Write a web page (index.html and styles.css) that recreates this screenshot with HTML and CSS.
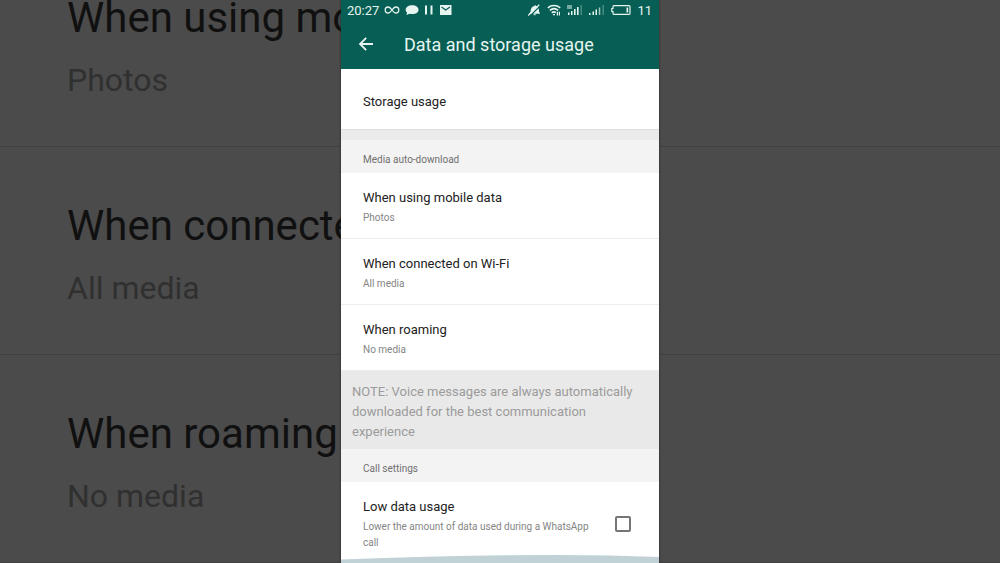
FILE: index.html
```html
<!DOCTYPE html>
<html lang="en">
<head>
<meta charset="utf-8">
<title>Data and storage usage</title>
<link rel="stylesheet" href="styles.css">
</head>
<body>
<div class="stage">
  <div class="backdrop" aria-hidden="true">
    <div class="back-row"><div class="back-title">When using mobile data</div><div class="back-sub">Photos</div></div>
    <div class="back-row"><div class="back-title">When connected on Wi-Fi</div><div class="back-sub">All media</div></div>
    <div class="back-row"><div class="back-title">When roaming</div><div class="back-sub">No media</div></div>
  </div>
  <main class="phone">
    <div class="status">
      <span>20:27</span>
      <svg class="loop" width="16" height="10" viewBox="0 0 16 10" fill="none" stroke="currentColor" stroke-width="1.3"><path d="M8 5C6.500 2.800 5.600 2 4.200 2a3 3 0 0 0 0 6C5.600 8 6.500 7.200 8 5s2.400-3 3.800-3a3 3 0 0 1 0 6C10.400 8 9.500 7.200 8 5z"/></svg>
      <svg width="14" height="12" viewBox="0 0 12 12" preserveAspectRatio="none" fill="currentColor"><path d="M6.200 1.300c3.200 0 5.400 1.900 5.400 4.400s-2.200 4.400-5.400 4.400c-.8 0-1.500-.1-2.200-.3L1.200 11l.6-2.400C.9 7.900.6 6.800.6 5.700c0-2.500 2.400-4.400 5.600-4.400z"/></svg>
      <svg width="10" height="12" viewBox="0 0 10 12" fill="currentColor"><path d="M1 1.500h2v9H1zM6.500 1.500h2v9h-2z"/></svg>
      <svg width="13" height="12" viewBox="0 0 13 12"><path fill="currentColor" d="M1 1h11.500v10H1z"/><path d="M2.500 3l4.200 3 4.200-3" fill="none" stroke="#075e54" stroke-width="1.200"/></svg>
      <span class="status-right">
        <svg width="14" height="12" viewBox="0 0 14 12"><path fill="currentColor" d="M2 9.700l1.500-1.800C3.700 4.800 4.500 2.400 7.300 2c.2-1 1.700-1 1.900 0 .8.200 1.500.5 1.900 1l-7 7H2zM11.800 4.300c.2 1.400.2 2.600.2 3.300l1.200 2.100H6.100zM6.300 10.300h2.700c-.2 1.300-2.500 1.300-2.700 0z"/><path d="M1.200 11.500L12.300.7" stroke="currentColor" stroke-width="1.200"/></svg>
        <svg width="14" height="12" viewBox="0 0 14 12" fill="none" stroke="currentColor" stroke-width="1.600"><path d="M.8 3.800c3.600-3 8.800-3 12.400 0M2.800 6.400c2.500-2.100 5.900-2.100 8.400 0M4.800 8.800c1.300-1.100 2.900-1.100 4 0"/><path d="M6 10.700h2M10.400 7.800v3.700M12.400 7.800v3.700" stroke-width="1.200"/></svg>
        <svg class="signal" width="16" height="12" viewBox="0 0 16 12" fill="currentColor"><path d="M1 8.500h1.500V11H1zM4 7h1.500v4H4zM7 5h1.600v6H7zM10 3h1.600v8H10zM0 1.500h5v1H0zM0 3.500h5v1H0z"/><path opacity=".3" d="M13.500 1H15v10h-1.500z"/></svg>
        <svg class="signal" width="16" height="12" viewBox="0 0 16 12" fill="currentColor"><path d="M0 9h1.500v2H0zM3.500 7.500H5V11H3.500zM6.500 5.500H8V11H6.500z"/><path d="M9.800 3.500h1.500V11H9.800z" opacity=".7"/><path opacity=".3" d="M13.500 1H15v10h-1.500z"/></svg>
        <svg class="battery" width="20" height="12" viewBox="0 0 20 12"><path d="M3 1.700h15q1 0 1 1v6.600q0 1-1 1H3q-1 0-1-1V7.500H.8v-3H2V2.700q0-1 1-1z" fill="none" stroke="currentColor" stroke-width="1.200"/><path d="M15.500 3.500h1.700v5h-1.700z" fill="currentColor"/></svg>
        <span>11</span>
      </span>
    </div>
    <header class="appbar">
      <button class="back" type="button" aria-label="Back"><svg width="16" height="16" viewBox="0 0 16 16" fill="none" stroke="currentColor" stroke-width="1.800"><path d="M15 7H2.300M8.200 .8L2 7l6.200 6.200"/></svg></button>
      <h1 class="heading">Data and storage usage</h1>
    </header>
    <button class="row storage" type="button"><span class="title">Storage usage</span></button>
    <div class="band"></div>
    <h2 class="section">Media auto-download</h2>
    <button class="row" type="button"><span class="title">When using mobile data</span><span class="sub">Photos</span></button>
    <button class="row" type="button"><span class="title">When connected on Wi-Fi</span><span class="sub">All media</span></button>
    <button class="row" type="button"><span class="title">When roaming</span><span class="sub">No media</span></button>
    <p class="note">NOTE: Voice messages are always automatically downloaded for the best communication experience</p>
    <h2 class="section">Call settings</h2>
    <label class="row option">
      <span class="option-text"><span class="title">Low data usage</span><span class="sub">Lower the amount of data used during a WhatsApp call</span></span>
      <input class="check" type="checkbox">
    </label>
    <svg class="wave" viewBox="0 0 318 8" preserveAspectRatio="none" aria-hidden="true"><path d="M0 4.500Q110 0 215 0Q270 0 318 2V8H0z" fill="#c0d2d5"/></svg>
  </main>
</div>
</body>
</html>
```
FILE: styles.css
```css
* { box-sizing: border-box; }

body {
  margin: 0;
  font-family: Roboto, "Liberation Sans", sans-serif;
  background: #4b4b4b;
}

.stage {
  display: grid;
  grid-template: 100vh / 100%;
  justify-items: center;
  overflow: hidden;
}

.backdrop,
.phone { grid-area: 1 / 1; }

.backdrop {
  width: 100%;
  display: flex;
  flex-direction: column;
  justify-content: flex-end;
  overflow: hidden;
  white-space: nowrap;
}

.back-row {
  flex: none;
  padding: 54px 67px 46px;
  border-bottom: 1px solid #414141;
}

.back-title {
  font-size: 42px;
  line-height: 50px;
  color: #101010;
}

.back-sub {
  margin-top: 17px;
  font-size: 32px;
  line-height: 40px;
  color: #303030;
}

.phone {
  position: relative;
  width: 100%;
  max-width: 318px;
  display: flex;
  flex-direction: column;
  overflow: hidden;
  background: #fff;
  box-shadow: 0 0 2px #222;
}

.phone > * { flex: none; }

.status {
  display: flex;
  align-items: center;
  gap: 5px;
  height: 20px;
  padding: 0 7px 0 6px;
  font-size: 13px;
  color: #e6f5f0;
  background: #075e54;
}

.status-right {
  display: flex;
  align-items: center;
  gap: 6px;
  margin-left: auto;
}

.appbar {
  display: flex;
  align-items: center;
  gap: 30px;
  height: 49px;
  padding: 0 17px;
  color: #e6f5f0;
  background: #075e54;
}

.back {
  display: flex;
  padding: 0;
  border: 0;
  color: inherit;
  background: none;
}

.heading {
  margin: 0;
  font-size: 18px;
  font-weight: 400;
}

.row {
  display: flex;
  flex-direction: column;
  gap: 2px;
  padding: 15px 22px 12px;
  border: 0;
  border-bottom: 1px solid #ededed;
  font: inherit;
  text-align: left;
  background: #fff;
}

.storage { padding: 23px 22px 17px; border: 0; }

.title {
  display: block;
  font-size: 13px;
  line-height: 20px;
  color: #222;
}

.sub {
  display: block;
  font-size: 10px;
  line-height: 16px;
  color: #858585;
}

.band {
  height: 11px;
  border-top: 1px solid #ddd;
  background: #ebebeb;
}

.section {
  margin: 0;
  padding: 12px 22px 5px;
  font-size: 10px;
  font-weight: 400;
  line-height: 16px;
  color: #707070;
  background: #f3f3f3;
}

.note {
  margin: 0;
  padding: 11px 11px 7px;
  font-size: 13px;
  line-height: 20px;
  color: #9b9b9b;
  background: #e9e9e9;
}

.option {
  flex-direction: row;
  align-items: center;
  gap: 16px;
  padding: 15px 28px 12px 22px;
  border: 0;
}

.option-text {
  display: flex;
  flex: 1;
  flex-direction: column;
  gap: 2px;
}

.check {
  appearance: none;
  width: 16px;
  height: 16px;
  margin: 0;
  border: 2px solid #757575;
  border-radius: 2px;
}

.wave {
  position: absolute;
  bottom: 0;
  left: 0;
  width: 100%;
  height: 8px;
}
```
